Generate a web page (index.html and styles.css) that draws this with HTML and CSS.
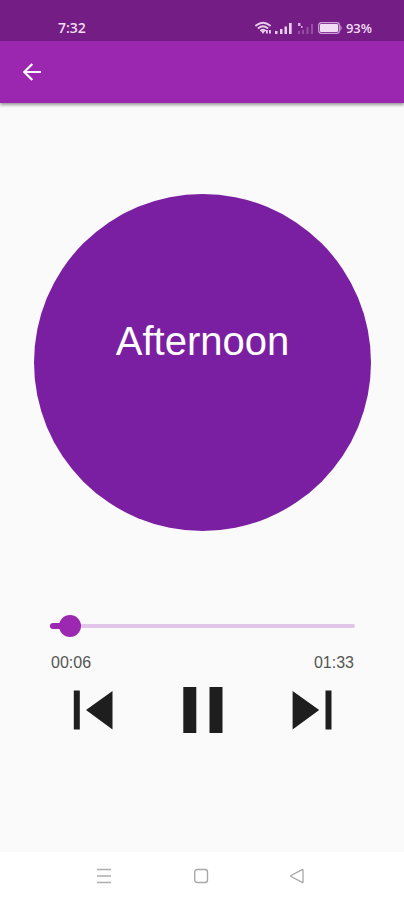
FILE: index.html
```html
<!DOCTYPE html>
<html lang="en">
<head>
<meta charset="utf-8">
<meta name="viewport" content="width=device-width, initial-scale=1">
<title>Afternoon</title>
<link rel="stylesheet" href="styles.css">
</head>
<body>
<div class="status">
  <time class="clock">7:32</time>
  <div class="indicators">
    <svg width="60" height="14" viewBox="0 0 60 14" aria-hidden="true">
      <g fill="none" stroke="#e9cdee" stroke-width="1.9" stroke-linecap="round">
        <path d="M1 4.500Q8 -1 15 4.500M3.500 7Q8 3.500 12.500 7M6 9.500Q8 8 10 9.500"/>
      </g>
      <path fill="#e9cdee" d="M6 10h4L8 13zM11 9h1.800v3.500H11zM14 9h1.800v3.500H14z"/>
      <path fill="#e9cdee" d="M20 10h2.500v3H20zM25 8h2.500v5H25zM29.500 5.500H32V13h-2.500zM34 2h2.700v11H34z"/>
      <path fill="#d9a9e2" d="M43 2h2.500v3H43zM46 5h1.500v2H46z"/>
      <path fill="#9550a3" d="M43 10h2v3h-2zM47 9h2v4h-2zM51.500 6h2v7h-2zM56 3h2v10h-2z"/>
    </svg>
    <svg width="25" height="12" viewBox="0 0 25 12" aria-hidden="true">
      <rect x=".7" y=".7" width="20.600" height="10.600" rx="2.500" fill="none" stroke="#cf9fd8" stroke-width="1.300"/>
      <rect x="2" y="2" width="18" height="8" rx="1" fill="#f0dcf3"/>
      <path d="M22.500 3q2 3 0 6z" fill="#e9cdee"/>
    </svg>
    <span class="charge">93%</span>
  </div>
</div>
<header class="appbar">
  <button class="icon-button back" aria-label="Back">
    <svg width="18" height="18" viewBox="0 0 18 18"><path d="M18 9H1.500M9.300 1L1.300 9l8 8" fill="none" stroke="#fff" stroke-width="2.200"/></svg>
  </button>
</header>
<main class="player">
  <div class="cover"><h1 class="title">Afternoon</h1></div>
  <div class="seek">
    <div class="track"><div class="played" style="width: 6.450%"></div></div>
    <input class="range" type="range" min="0" max="93" value="6" aria-label="Playback position">
  </div>
  <div class="times"><span>00:06</span><span>01:33</span></div>
  <div class="controls">
    <button class="icon-button" aria-label="Previous">
      <svg width="40" height="46" viewBox="0 0 40 46"><path fill="#1e1e1e" d="M.8 3.500h6v39h-6zM39.500 4v38.500L13 23z"/></svg>
    </button>
    <button class="icon-button" aria-label="Pause">
      <svg width="40" height="46" viewBox="0 0 40 46"><path fill="#1e1e1e" d="M.3 0h13v46h-13zM26.500 0h13v46h-13z"/></svg>
    </button>
    <button class="icon-button" aria-label="Next">
      <svg width="40" height="46" viewBox="0 0 40 46"><path fill="#1e1e1e" d="M33.500 3.500h6v39h-6zM.6 4v38.500L27.200 23z"/></svg>
    </button>
  </div>
</main>
<nav class="system" aria-label="System">
  <button class="icon-button" aria-label="Recent apps">
    <svg width="16" height="16" viewBox="0 0 16 16"><path d="M1 1.500h14M1 8h14M1 14.500h14" stroke="#adadad" stroke-width="1.500"/></svg>
  </button>
  <button class="icon-button" aria-label="Home">
    <svg width="16" height="16" viewBox="0 0 16 16"><rect x="1.700" y="1.500" width="12.800" height="13" rx="2.500" fill="none" stroke="#a8a8a8" stroke-width="1.400"/></svg>
  </button>
  <button class="icon-button" aria-label="Back">
    <svg width="16" height="16" viewBox="0 0 16 16"><path d="M14 2v12q0 .8-.8.400L2 8.500q-.8-.5 0-1L13.200 1.600q.8-.4.8.4z" fill="none" stroke="#a8a8a8" stroke-width="1.300"/></svg>
  </button>
</nav>
</body>
</html>
```
FILE: styles.css
```css
* {
  box-sizing: border-box;
}

body {
  margin: 0;
  min-height: 100vh;
  display: flex;
  flex-direction: column;
  background: #fafafa;
  font-family: "Liberation Sans", Arial, sans-serif;
}

.icon-button {
  display: flex;
  padding: 0;
  border: 0;
  background: none;
  cursor: pointer;
}

.status {
  height: 41px;
  padding: 16px 32px 0 58px;
  display: flex;
  justify-content: space-between;
  align-items: flex-start;
  background: #741d85;
  color: #f0dcf3;
  font-family: "Open Sans", sans-serif;
  font-size: 14px;
  font-weight: 600;
  line-height: 24px;
}

.indicators {
  display: flex;
  align-items: center;
  gap: 3px;
}

.charge {
  font-size: 13px;
}

.appbar {
  height: 62px;
  padding: 0 23px;
  display: flex;
  align-items: center;
  background: #9b27b0;
  box-shadow: 0 2px 3px rgba(0, 0, 0, 0.4);
}

.player {
  flex: 1;
  padding: 91px 33px 0;
  display: flex;
  flex-direction: column;
}

.cover {
  margin: 0 0 0 1px;
  aspect-ratio: 1;
  display: flex;
  align-items: center;
  justify-content: center;
  border-radius: 50%;
  background: #7b1fa2;
}

.title {
  margin: 0;
  padding-bottom: 44px;
  color: #fff;
  font-size: 40px;
  font-weight: 400;
  line-height: 48px;
}

.seek {
  margin: 83px 5px 0 6px;
  display: grid;
  align-items: center;
}

.track,
.range {
  grid-area: 1 / 1;
}

.track {
  height: 4px;
  margin: 0 11px;
  display: flex;
  align-items: center;
  border-radius: 2px;
  background: #e1c5e9;
}

.played {
  height: 6px;
  border-radius: 3px;
  background: #9c27b0;
}

.range {
  width: 100%;
  height: 24px;
  margin: 0;
  appearance: none;
  background: transparent;
}

.range::-webkit-slider-thumb {
  appearance: none;
  width: 22px;
  height: 22px;
  border-radius: 50%;
  background: #9c27b0;
}

.times {
  margin: 15px 17px 0 18px;
  display: flex;
  justify-content: space-between;
  color: #555;
  font-size: 16px;
  line-height: 20px;
}

.controls {
  margin: 14px 39px 0 40px;
  display: flex;
  justify-content: space-between;
}

.system {
  height: 48px;
  padding: 0 99px 0 96px;
  display: flex;
  align-items: center;
  justify-content: space-between;
  background: #fff;
}
```
